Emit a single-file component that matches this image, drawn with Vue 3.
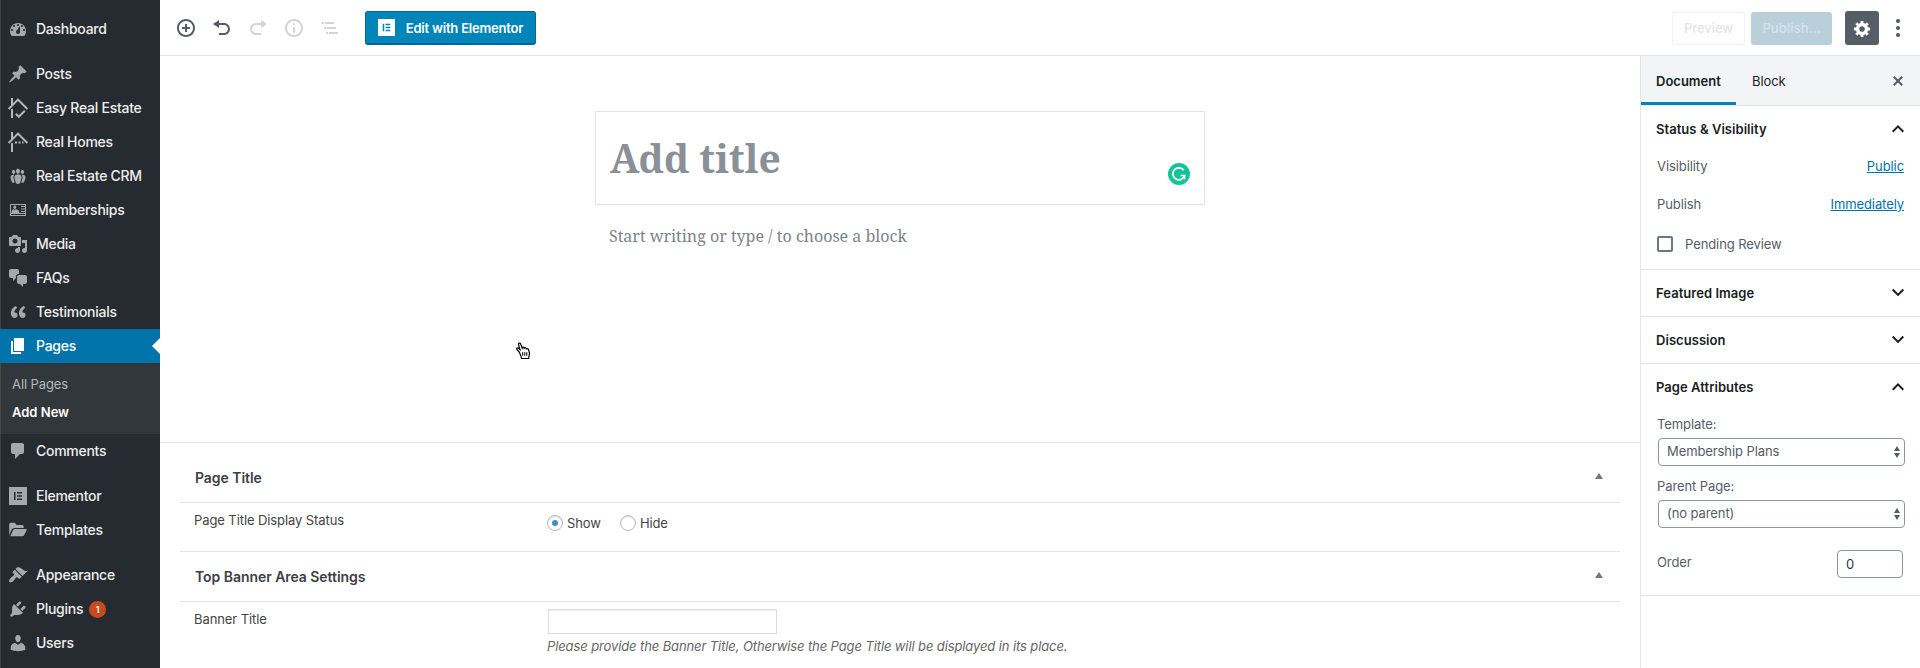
<script setup>
const icons = {
  dashboard: 'M3.76 17h12.48c1.1-1.37 1.76-3.11 1.76-5 0-4.42-3.58-8-8-8s-8 3.58-8 8c0 1.89.66 3.63 1.76 5zM10 5c.55 0 1 .45 1 1s-.45 1-1 1-1-.45-1-1 .45-1 1-1zM6 6c.55 0 1 .45 1 1s-.45 1-1 1-1-.45-1-1 .45-1 1-1zm8 0c.55 0 1 .45 1 1s-.45 1-1 1-1-.45-1-1 .45-1 1-1zm-5.37 5.55L12 7v6c0 1.1-.9 2-2 2s-2-.9-2-2c0-.57.24-1.08.63-1.45zM4 10c.55 0 1 .45 1 1s-.45 1-1 1-1-.45-1-1 .45-1 1-1zm12 0c.55 0 1 .45 1 1s-.45 1-1 1-1-.45-1-1 .45-1 1-1z',
  post: 'M10.44 3.02l1.82-1.82 6.36 6.35-1.83 1.82c-1.05-.68-2.48-.57-3.41.36l-.75.75c-.92.93-1.04 2.35-.35 3.41l-1.83 1.82-2.41-2.41-2.8 2.79c-.42.42-3.38 2.71-3.8 2.29s1.86-3.39 2.28-3.81l2.79-2.79L4.1 9.36l1.83-1.82c1.05.69 2.48.57 3.4-.36l.75-.75c.93-.92 1.05-2.35.36-3.41z',
  groups: 'M8.03 4.46c-.29 1.28.55 3.46 1.97 3.46 1.41 0 2.25-2.18 1.96-3.46-.22-.98-1.08-1.63-1.96-1.63-.89 0-1.74.65-1.97 1.63zm-4.13.9c-.25 1.08.47 2.93 1.67 2.93s1.92-1.85 1.67-2.93c-.19-.83-.92-1.39-1.67-1.39s-1.48.56-1.67 1.39zm8.86 0c-.25 1.08.47 2.93 1.66 2.93 1.2 0 1.92-1.85 1.67-2.93-.19-.83-.92-1.39-1.67-1.39-.74 0-1.47.56-1.66 1.39zm-.59 11.43l1.25-4.3C14.2 10 12.71 8.47 10 8.47c-2.72 0-4.21 1.53-3.44 4.02l1.26 4.3C8.05 17.51 9 18 10 18c.98 0 1.94-.49 2.17-1.21zm-6.1-7.63c-.49.67-.96 1.83-.42 3.59l1.12 3.79c-.34.2-.77.31-1.2.31-.85 0-1.65-.41-1.85-1.03l-1.07-3.65c-.65-2.11.61-3.4 2.92-3.4.27 0 .54.02.79.06-.1.1-.2.22-.29.33zm8.35-.39c2.31 0 3.58 1.29 2.92 3.4l-1.07 3.65c-.2.62-1 1.03-1.85 1.03-.43 0-.86-.11-1.2-.31l1.11-3.77c.55-1.78.08-2.94-.42-3.61-.08-.11-.18-.23-.28-.33.25-.04.51-.06.79-.06z',
  card: 'M2 4h16v12H2zM3 5v10h14v-1h-14v-1h14v-1h-4v-1h4v-1.500h-4V8.500h4V7h-4V6h4V5zM6.800 5.600C8 5.600 8.400 6.600 8.200 7.600 8.100 8.300 7.700 9 6.800 9S5.500 8.300 5.400 7.600C5.200 6.600 5.600 5.600 6.800 5.600zM3.600 13v-1.500C3.600 10.300 4.800 9.300 6 9.300l.8.7.8-.7c1.400 0 3.600 1 3.600 2.200V13z',
  media: 'M13 11V4c0-.55-.45-1-1-1h-1.67L9 1H5L3.67 3H2c-.55 0-1 .45-1 1v7c0 .55.45 1 1 1h10c.55 0 1-.45 1-1zM7 4.5c1.38 0 2.5 1.12 2.5 2.5S8.38 9.500 7 9.500 4.500 8.380 4.500 7 5.620 4.500 7 4.500zM14 6h5v10.500c0 1.380-1.120 2.500-2.500 2.500S14 17.880 14 16.500s1.120-2.500 2.500-2.500c.17 0 .34.02.5.05V9h-3V6zm-4 8.050V13h2v3.500c0 1.380-1.120 2.500-2.500 2.500S7 17.880 7 16.500 8.120 14 9.500 14c.17 0 .34.02.5.05z',
  chat: 'M11 6h-.82C9.07 6 8 7.2 8 8.16V10l-3 3v-3H3c-1.1 0-2-.9-2-2V3c0-1.1.9-2 2-2h6c1.1 0 2 .9 2 2v3zm0 1h6c1.1 0 2 .9 2 2v5c0 1.1-.9 2-2 2h-2v3l-3-3h-1c-1.1 0-2-.9-2-2V9c0-1.1.9-2 2-2z',
  quote: 'M9.49 13.22c0-.74-.2-1.38-.61-1.9-.62-.78-1.83-.88-2.53-.72-.29-1.65 1.11-3.75 2.92-4.65L7.88 4c-2.73 1.3-5.42 4.28-4.96 8.05C3.21 14.43 4.59 16 6.54 16c.85 0 1.56-.25 2.12-.75s.83-1.18.83-2.03zm8.05 0c0-.74-.2-1.38-.61-1.9-.63-.78-1.83-.88-2.53-.72-.29-1.65 1.11-3.75 2.92-4.65L15.93 4c-2.73 1.3-5.41 4.28-4.95 8.05.29 2.38 1.66 3.95 3.61 3.95.85 0 1.56-.25 2.12-.75s.83-1.18.83-2.03z',
  page: 'M6 15V2h10v13H6zm-1 1h8v2H3V5h2v11z',
  comments: 'M5 2h9c1.1 0 2 .9 2 2v7c0 1.1-.9 2-2 2h-2l-5 5v-5H5c-1.1 0-2-.9-2-2V4c0-1.1.9-2 2-2z',
  elementor: 'M1.500 1h17c.3 0 .5.2.5.5v17c0 .3-.2.5-.5.5h-17c-.3 0-.5-.2-.5-.5v-17c0-.3.200-.5.5-.5zM6 6v8h1.500V6zM9 6v1.500h5V6zM9 9.250v1.500h5v-1.500zM9 12.500V14h5v-1.500z',
  folder: 'M1.200 15V4.500c0-1 .6-1.700 1.600-1.700h4L8.600 5h5.600c.8 0 1.400.5 1.400 1.400V8H6.800c-1.500 0-2.700.7-3.400 2zM2.200 16.300l2.700-5.700c.4-.9 1.200-1.500 2.200-1.500h11.100c.5 0 .7.3.5.8l-2.500 5.100c-.4.900-1 1.300-2 1.300z',
  appearance: 'M14.48 11.06L7.41 3.99l1.5-1.5c.5-.56 2.3-.47 3.51.32 1.21.8 1.43 1.28 2.91 2.1 1.18.64 2.45 1.26 4.45.85zm-.71.71L6.7 4.7 4.93 6.47c-.39.39-.39 1.02 0 1.41l1.06 1.06c.39.39.39 1.03 0 1.42-.6.6-1.43 1.11-2.21 1.69-.35.26-.7.53-1.01.84C1.43 14.23.4 16.08 1.4 17.07c.99 1 2.84-.03 4.18-1.36.31-.31.58-.66.85-1.02.57-.78 1.08-1.61 1.69-2.21.39-.39 1.02-.39 1.41 0l1.06 1.06c.39.39 1.02.39 1.41 0z',
  plugins: 'M13.11 4.36L9.87 7.6 8 5.73l3.24-3.24c.35-.34 1.05-.2 1.56.32.52.51.66 1.21.31 1.55zm-8 1.77l.91-1.12 9.01 9.01-1.19.84c-.71.71-2.63 1.16-3.82 1.16H6.14L4.9 17.26c-.59.59-1.54.59-2.12 0-.59-.58-.59-1.53 0-2.12l1.24-1.24v-3.88c0-1.13.4-3.19 1.09-3.89zm7.26 3.97l3.24-3.24c.34-.35 1.04-.21 1.55.31.52.51.66 1.21.31 1.55l-3.24 3.25z',
  users: 'M10 9.25c-2.27 0-2.73-3.44-2.73-3.44C7 4.02 7.82 2 9.97 2c2.16 0 2.98 2.02 2.71 3.81 0 0-.41 3.44-2.68 3.44zm0 2.57L12.72 10c2.39 0 4.52 2.33 4.52 4.53v2.49s-3.65 1.13-7.24 1.13c-3.65 0-7.24-1.13-7.24-1.13v-2.49c0-2.25 1.94-4.48 4.47-4.48z',
}
const up = 'M12 8l-6 6 1.41 1.41L12 10.83l4.59 4.58L18 14z'
const down = 'M7.41 7.84L12 12.42l4.59-4.58L18 9.25l-6 6-6-6z'
const menu = [
  { t: 'Dashboard', i: 'dashboard' },
  { t: 'Posts', i: 'post', gap: true },
  { t: 'Easy Real Estate', line: 'M.6 11L10 1.600l9.400 9.400M4 7V0M4 11v9M7.800 15.800l3 3 6-6' },
  { t: 'Real Homes', line: 'M.6 11L10 1.600l9.400 9.400M4 7V0M4 11v9M7 10.500h2M10.500 10.500h2M14 10.500h1.500' },
  { t: 'Real Estate CRM', i: 'groups' },
  { t: 'Memberships', i: 'card' },
  { t: 'Media', i: 'media' },
  { t: 'FAQs', i: 'chat' },
  { t: 'Testimonials', i: 'quote' },
  { t: 'Pages', i: 'page', active: true, sub: ['All Pages', 'Add New'] },
  { t: 'Comments', i: 'comments' },
  { t: 'Elementor', i: 'elementor', gap: true },
  { t: 'Templates', i: 'folder' },
  { t: 'Appearance', i: 'appearance', gap: true },
  { t: 'Plugins', i: 'plugins', badge: 1 },
  { t: 'Users', i: 'users' },
]
const tools = [
  { box: 20, d: 'M10 1c-5 0-9 4-9 9s4 9 9 9 9-4 9-9-4-9-9-9zm0 16c-3.900 0-7-3.100-7-7s3.100-7 7-7 7 3.100 7 7-3.100 7-7 7zm1-11H9v3H6v2h3v3h2v-3h3V9h-3V6z' },
  { box: 20, d: 'M12 5H7V2L1 6l6 4V7h5c2.200 0 4 1.800 4 4s-1.800 4-4 4H7v2h5c3.300 0 6-2.700 6-6s-2.700-6-6-6z' },
  { box: 20, off: true, d: 'M8 5h5V2l6 4-6 4V7H8c-2.200 0-4 1.800-4 4s1.800 4 4 4h5v2H8c-3.300 0-6-2.700-6-6s2.700-6 6-6z' },
  { box: 20, off: true, d: 'M9 15h2V9H9v6zm1-10c-.5 0-1 .5-1 1s.5 1 1 1 1-.5 1-1-.5-1-1-1zm0-4c-5 0-9 4-9 9s4 9 9 9 9-4 9-9-4-9-9-9zm0 16c-3.900 0-7-3.100-7-7s3.100-7 7-7 7 3.100 7 7-3.100 7-7 7z' },
  { box: 20, off: true, d: 'M2 4h2v2H2zM5 4h9v2H5zM4 9h2v2H4zM7 9h9v2H7zM6 14h2v2H6zM9 14h9v2H9z' },
]
</script>

<template>
  <div class="app">
    <nav class="menu">
      <template v-for="m in menu" :key="m.t">
        <div class="item" :class="{ gap: m.gap, active: m.active }">
          <svg v-if="m.i" class="mi" viewBox="0 0 20 20"><path :d="icons[m.i]" fill-rule="evenodd" /></svg>
          <svg v-else class="mi house" viewBox="0 0 20 20"><path :d="m.line" /></svg>
          <span>{{ m.t }}</span>
          <span v-if="m.badge" class="badge">{{ m.badge }}</span>
        </div>
        <div v-if="m.sub" class="sub">
          <span v-for="(s, n) in m.sub" :key="s" :class="{ current: n === 1 }">{{ s }}</span>
        </div>
      </template>
    </nav>

    <div class="work">
      <header class="bar">
        <div class="tools">
          <svg v-for="(t, n) in tools" :key="n" :class="{ off: t.off }" :viewBox="`0 0 ${t.box} ${t.box}`"><path :d="t.d" /></svg>
        </div>
        <button class="btn elementor">
          <svg viewBox="0 0 18 18"><path d="M0 0h18v18H0zM5 5v8h1.600V5zM8 5v1.600h5V5zM8 8.200v1.600h5V8.200zM8 11.400V13h5v-1.600z" fill-rule="evenodd" /></svg>
          <span>Edit with Elementor</span>
        </button>
        <div class="spacer"></div>
        <button class="btn preview">Preview</button>
        <button class="btn publish">Publish…</button>
        <button class="gear">
          <svg viewBox="0 0 20 20"><path d="M18 12h-2.180c-.17.7-.44 1.350-.81 1.930l1.540 1.540-2.100 2.100-1.540-1.540c-.58.36-1.230.63-1.910.79V19H8v-2.180c-.68-.16-1.330-.43-1.910-.79l-1.540 1.540-2.120-2.120 1.540-1.540c-.36-.58-.63-1.230-.79-1.910H1V9.030h2.170c.16-.7.44-1.350.8-1.940L2.430 5.550l2.100-2.100 1.540 1.540c.58-.37 1.240-.64 1.930-.81V2h3v2.180c.68.16 1.330.43 1.910.79l1.540-1.540 2.120 2.120-1.540 1.540c.36.59.64 1.240.8 1.940H18V12zm-8.500 1.500c1.660 0 3-1.340 3-3s-1.340-3-3-3-3 1.340-3 3 1.340 3 3 3z" /></svg>
        </button>
        <svg class="more" viewBox="0 0 6 20"><circle cx="3" cy="3" r="2.100" /><circle cx="3" cy="10" r="2.100" /><circle cx="3" cy="17" r="2.100" /></svg>
      </header>

      <div class="body">
        <main class="editor">
          <section class="canvas">
            <div class="title"><span>Add title</span>
              <svg class="grammar" viewBox="0 0 22 22"><circle cx="11" cy="11" r="11" fill="#15c39a" /><path d="M15.700 7.300A6 6 0 1 0 16.600 12.500H12.700M16.500 12.500V16.200" fill="none" stroke="#fff" stroke-width="1.700" /></svg>
            </div>
            <p class="start">Start writing or type / to choose a block</p>
            <svg class="cursor" viewBox="0 0 16 18"><path d="M4.200 10L2 7.700C.9 6.500 2.200 5.300 3.400 6.300L5 7.600 3.500 2.600C3.200.8 5.200.5 5.700 2.100L7.100 6C7.400 4.800 9 5 9.200 6.300 9.800 5.300 11.200 5.700 11.400 6.900 12.200 6.200 13.500 6.800 13.600 8L14.500 11.300C14.600 13 13.800 13.800 13.700 16.500H6.500C6.200 14.200 5.200 12.500 4.200 10z" fill="#fff" stroke="#000" stroke-width="1.200" /><path d="M7.700 10.200v3.600M9.800 10.200v3.600M11.800 10.200v3.600" stroke="#000" fill="none" /></svg>
          </section>
          <section class="meta">
            <div class="head h1"><span>Page Title</span><i></i></div>
            <div class="row r1">
              <span class="name">Page Title Display Status</span>
              <label class="opt"><b class="radio on"></b>Show</label>
              <label class="opt"><b class="radio"></b>Hide</label>
            </div>
            <div class="head h2"><span>Top Banner Area Settings</span><i></i></div>
            <div class="row r2">
              <span class="name">Banner Title</span>
              <div><div class="field"></div><em>Please provide the Banner Title, Otherwise the Page Title will be displayed in its place.</em></div>
            </div>
          </section>
        </main>

        <aside class="side">
          <div class="tabs">
            <div class="tab on">Document</div>
            <div class="tab">Block</div>
            <svg class="close" viewBox="0 0 20 20"><path d="M14.950 6.460L11.410 10l3.540 3.540-1.410 1.410L10 11.420l-3.530 3.530-1.420-1.420L8.580 10 5.050 6.470l1.420-1.420L10 8.580l3.540-3.530z" /></svg>
          </div>
          <section class="panel status">
            <h2>Status &amp; Visibility<svg viewBox="0 0 24 24"><path :d="up" /></svg></h2>
            <div class="line l1"><span>Visibility</span><a>Public</a></div>
            <div class="line l2"><span>Publish</span><a>Immediately</a></div>
            <div class="pending"><b></b><span>Pending Review</span></div>
          </section>
          <section class="panel"><h2>Featured Image<svg viewBox="0 0 24 24"><path :d="down" /></svg></h2></section>
          <section class="panel"><h2>Discussion<svg viewBox="0 0 24 24"><path :d="down" /></svg></h2></section>
          <section class="panel attrs">
            <h2>Page Attributes<svg viewBox="0 0 24 24"><path :d="up" /></svg></h2>
            <div class="lab a1">Template:</div>
            <div class="select">Membership Plans<svg viewBox="0 0 6 12"><path d="M3 0l3 5H0zM3 12l3-5H0z" /></svg></div>
            <div class="lab a2">Parent Page:</div>
            <div class="select">(no parent)<svg viewBox="0 0 6 12"><path d="M3 0l3 5H0zM3 12l3-5H0z" /></svg></div>
            <div class="order"><span>Order</span><div>0</div></div>
          </section>
        </aside>
      </div>
    </div>
  </div>
</template>

<style>
body { margin: 0; overflow: hidden; }
</style>

<style scoped>
* { box-sizing: border-box; }
.app { display: flex; width: 1920px; height: 668px; overflow: hidden; background: #fff; font: 13px/20px Inter, "Liberation Sans", sans-serif; letter-spacing: -0.09px; color: #555d66; white-space: nowrap; }
svg { display: block; fill: currentColor; flex: none; }
button { font: inherit; letter-spacing: inherit; border: 0; margin: 0; padding: 0; }
.menu { width: 160px; height: 668px; padding-top: 12px; background: #262b31; box-shadow: inset 1px 0 #3a3f45; flex: none; }
.item { display: flex; align-items: center; height: 34px; padding-left: 8px; color: #eee; font-size: 14px; font-weight: 500; letter-spacing: -0.27px; position: relative; }
.gap { margin-top: 11px; }
.mi { width: 20px; height: 20px; color: #a4a9ae; margin-right: 8px; }
.house { fill: none; stroke: #b4b8bb; stroke-width: 2; overflow: visible; }
.active { background: #0073aa; color: #fff; }
.active .mi { color: #fff; }
.active::after { content: ""; position: absolute; right: 0; top: 9px; border: 8px solid transparent; border-right-color: #fff; border-left: 0; }
.badge { width: 17px; height: 17px; margin-left: 6px; border-radius: 50%; background: #ca4a1f; color: #fff; font-size: 9px; line-height: 17px; text-align: center; font-weight: 600; letter-spacing: 0; }
.sub { height: 71px; padding: 7px 0 0 12px; background: #32373c; color: #b4b9be; font-size: 13px; box-shadow: inset 1px 0 #44494e; }
.sub span { display: block; height: 28px; line-height: 28px; }
.sub .current { color: #fff; font-weight: 600; letter-spacing: 0; }
.work { flex: 1; min-width: 0; }
.bar { display: flex; align-items: center; height: 56px; padding: 1px 19px 0 16px; border-bottom: 1px solid #e2e4e7; }
.tools { display: flex; gap: 16px; width: 189px; color: #555d66; }
.tools svg { width: 20px; height: 20px; }
.tools .off { opacity: .26; }
.btn { display: flex; align-items: center; justify-content: center; height: 33px; border-radius: 3px; }
.elementor { width: 171px; height: 34px; background: #0085ba; border: 1px solid #006799; border-bottom-width: 2px; color: #fff; font-weight: 600; gap: 11px; letter-spacing: -0.2px; }
.elementor svg { width: 17px; height: 17px; }
.spacer { flex: 1; }
.preview { width: 73px; border: 1px solid #f0f1f2; background: #fff; color: #e3e5e7; margin-right: 6px; font-weight: 500; }
.publish { width: 81px; background: #b9d0da; color: #d3e4ec; margin-right: 13px; font-weight: 500; letter-spacing: 0.1px; }
.gear { width: 34px; height: 34px; border-radius: 3px; background: #555d66; color: #fff; display: flex; align-items: center; justify-content: center; margin-right: 16px; }
.gear svg { width: 19px; height: 19px; }
.more { width: 6px; height: 20px; }
.body { display: flex; height: 612px; }
.editor { width: 1480px; }
.canvas { height: 387px; padding: 55px 0 0 435px; position: relative; border-bottom: 1px solid #e2e4e7; }
.title { width: 610px; height: 94px; border: 1px solid #e2e4e7; padding: 0 14px; display: flex; align-items: center; color: #8a9098; font: bold 39px/50px "Noto Serif", "DejaVu Serif Condensed", "DejaVu Serif", serif; letter-spacing: 0; position: relative; }
.grammar { position: absolute; right: 14px; top: 51px; width: 22px; height: 22px; }
.start { margin: 18px 0 0 14px; font: 16px/26px "Noto Serif", "DejaVu Serif Condensed", "DejaVu Serif", serif; letter-spacing: 0; color: #7d838b; }
.cursor { position: absolute; left: 355px; top: 286px; width: 16px; height: 18px; }
.meta { padding: 0 20px; color: #444; }
.head { display: flex; align-items: center; justify-content: space-between; border-bottom: 1px solid #e2e4e7; padding: 0 17px 0 15px; color: #3c4045; font-size: 14px; font-weight: 600; letter-spacing: -0.05px; }
.head i { border: 4px solid transparent; border-top: 0; border-bottom: 6px solid #72777c; margin-bottom: 4px; }
.h1 { height: 60px; padding-top: 11px; }
.h2 { height: 50px; }
.row { display: flex; padding-left: 14px; }
.name { width: 353px; flex: none; }
.r1 { height: 49px; padding-top: 8px; border-bottom: 1px solid #e2e4e7; }
.opt { display: flex; height: 24px; align-items: center; margin-right: 19px; }
.r1 .name { margin-top: -1px; }
.radio { width: 16px; height: 16px; border: 1px solid #b4b9be; border-radius: 50%; margin-right: 4px; display: flex; align-items: center; justify-content: center; box-shadow: inset 0 1px 1px #ddd; }
.radio.on::after { content: ""; width: 6px; height: 6px; border-radius: 50%; background: #3c91c4; }
.r2 { padding-top: 7px; }
.field { width: 229px; height: 25px; margin-left: 1px; border: 1px solid #ddd; box-shadow: inset 0 1px 1px #eee; }
em { display: block; margin-top: 2px; color: #666; letter-spacing: -0.11px; }
.side { width: 280px; height: 612px; border-left: 1px solid #e2e4e7; }
.tabs { display: flex; height: 50px; background: #f3f4f5; border-bottom: 1px solid #e2e4e7; color: #191e23; align-items: stretch; }
.tab { line-height: 51px; padding: 0 16px 0 15px; height: 49px; }
.tab.on { width: 95px; border-bottom: 3px solid #0085ba; font-weight: 600; margin-right: 1px; letter-spacing: 0; }
.close { width: 20px; height: 20px; margin: 15px 12px 0 auto; color: #555d66; }
.panel { border-bottom: 1px solid #e2e4e7; height: 47px; padding: 0 15px; }
h2 { display: flex; justify-content: space-between; align-items: center; margin: 0 -5px 0 0; height: 46px; font-size: 13px; font-weight: 600; letter-spacing: 0.05px; color: #191e23; }
h2 svg { width: 24px; height: 24px; }
.status { height: 164px; }
.line { display: flex; justify-content: space-between; margin: 0 1px; height: 20px; }
.l1 { margin-top: 4px; }
.l2 { margin-top: 18px; }
a { color: #0073aa; text-decoration: underline; }
.pending { display: flex; align-items: center; gap: 12px; margin: 20px 0 0 1px; height: 20px; }
.pending b { width: 16px; height: 16px; border: 2px solid #6c7781; border-radius: 2px; }
.attrs { height: 232px; }
.lab { margin-left: 1px; height: 20px; }
.a1 { margin-top: 4px; }
.select { display: flex; align-items: center; justify-content: space-between; height: 28px; width: 247px; margin: 4px 0 0 2px; padding: 0 4px 2px 8px; border: 1px solid #8d96a0; border-radius: 4px; }
.select svg { width: 6px; height: 12px; margin-top: 2px; }
.a2 { margin-top: 10px; }
.order { display: flex; justify-content: space-between; margin: 22px 2px 0 1px; height: 28px; line-height: 24px; }
.order div { width: 66px; border: 1px solid #8d96a0; border-radius: 4px; padding-left: 8px; line-height: 27px; color: #32373c; }
</style>
